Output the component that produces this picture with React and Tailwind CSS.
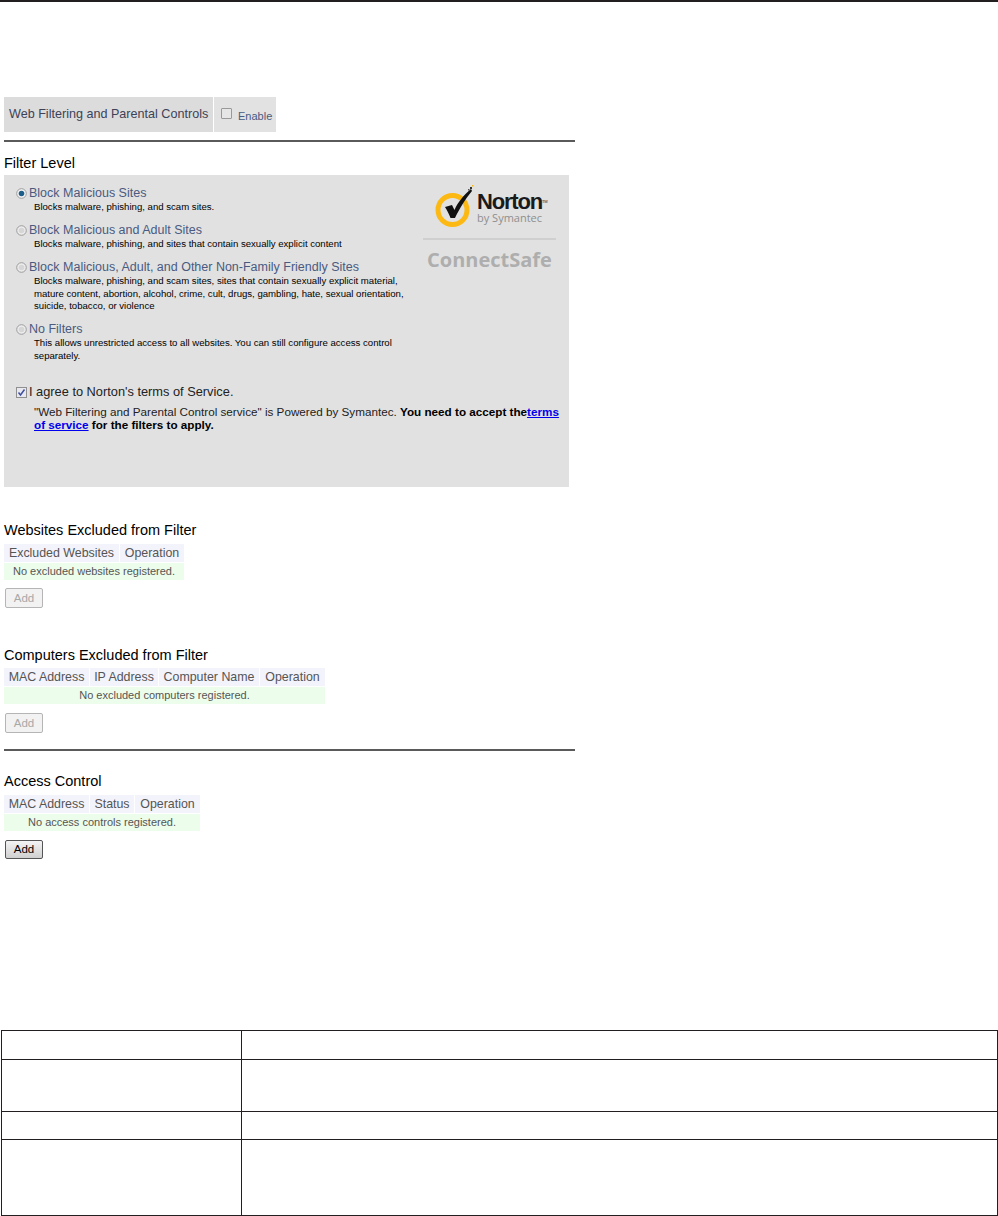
import React from 'react';

const filtros = [
  {
    titulo: 'Block Malicious Sites',
    activo: true,
    lineas: ['Blocks malware, phishing, and scam sites.'],
  },
  {
    titulo: 'Block Malicious and Adult Sites',
    lineas: ['Blocks malware, phishing, and sites that contain sexually explicit content'],
  },
  {
    titulo: 'Block Malicious, Adult, and Other Non-Family Friendly Sites',
    lineas: [
      'Blocks malware, phishing, and scam sites, sites that contain sexually explicit material,',
      'mature content, abortion, alcohol, crime, cult, drugs, gambling, hate, sexual orientation,',
      'suicide, tobacco, or violence',
    ],
  },
  {
    titulo: 'No Filters',
    lineas: [
      'This allows unrestricted access to all websites. You can still configure access control',
      'separately.',
    ],
  },
];

const Radio = ({ activo }) => (
  <svg width="11" height="11" viewBox="0 0 11 11" className="shrink-0">
    <circle cx="5.5" cy="5.5" r="4.8" fill={activo ? '#f4f4f4' : '#ececec'} stroke="#9c9c9c" />
    <circle cx="5.5" cy="5.5" r="2.8" fill={activo ? '#1d5f8a' : '#d6d6d6'} />
  </svg>
);

const NortonLogo = () => (
  <div className="w-[133px]">
    <div className="flex items-start h-[54px] pl-[12px]">
      <svg width="40" height="44" viewBox="0 0 40 44" className="shrink-0">
        <circle cx="17.5" cy="26" r="14.5" fill="none" stroke="#fdb913" strokeWidth="5" />
        <path d="M10 23 L17 21 L19.5 26 C23 18 28 12 36 5 L37 7 C30 15 24 26 20 34 L15.5 34 C14 30 12 26 10 23 Z" fill="#111" />
        <rect x="35" y="3" width="2" height="2" fill="#333" />
        <rect x="37" y="1" width="1.5" height="1.5" fill="#fdb913" />
        <rect x="33" y="5" width="1.5" height="1.5" fill="#555" />
      </svg>
      <div className="flex flex-col ml-[2px] mt-[7px]">
        <span className="font-bold text-[22px] leading-[21px] text-[#1a1a1a] tracking-[-1.2px] whitespace-nowrap">
          Norton<span className="text-[4px] align-top font-normal tracking-normal">TM</span>
        </span>
        <span className="font-['Open_Sans',sans-serif] text-[11px] leading-[12px] text-[#8f8f8f] whitespace-nowrap">by Symantec</span>
      </div>
    </div>
    <div className="h-[2px] bg-[#cfcfcf]" />
    <div className="font-['Open_Sans',sans-serif] font-bold text-[20px] leading-[26px] text-[#aeaeae] text-center mt-[7px]">ConnectSafe</div>
  </div>
);

const Tabla = ({ columnas, vacio }) => (
  <div className="flex flex-col w-fit">
    <div className="flex gap-px">
      {columnas.map(col => (
        <div key={col.nombre} className={`${col.ancho} bg-[#f3f3fb] h-[18px] text-center text-[12.4px] leading-[19px] text-[#555] whitespace-nowrap`}>
          {col.nombre}
        </div>
      ))}
    </div>
    <div className="bg-[#edfdeb] h-[17px] mt-px text-center text-[11px] leading-[16px] text-[#555]">{vacio}</div>
  </div>
);

const BotonAdd = ({ deshabilitado }) => (
  <button
    className={
      deshabilitado
        ? 'block ml-px w-[38px] h-[20px] border border-[#b5b5b5] rounded-[2px] bg-[#f2f2f2] text-[11.5px] leading-[18px] text-[#a8a8a8]'
        : 'block ml-px w-[38px] h-[19px] border border-[#555] rounded-[2px] bg-gradient-to-b from-[#f4f4f4] to-[#d0d0d0] text-[11.5px] leading-[17px] text-black'
    }
  >
    Add
  </button>
);

const Titulo = ({ children }) => (
  <div className="text-[14.5px] leading-[16px] text-black">{children}</div>
);

const filasAbajo = ['h-[28px]', 'h-[52px]', 'h-[28px]', 'h-[76px]'];

export default function App() {
  return (
    <div className="w-[998px] h-[1216px] bg-white font-['Liberation_Sans',Arial,sans-serif] overflow-hidden">
      <div className="h-[2px] bg-[#231f20]" />

      <div className="pl-[4px] pt-[95px]">
        {/* Encabezado */}
        <div className="flex gap-px">
          <div className="w-[209px] h-[35px] bg-[#dcdcdc] px-[5px] text-[12.6px] leading-[34px] text-[#3c4257] whitespace-nowrap">
            Web Filtering and Parental Controls
          </div>
          <div className="w-[62px] h-[35px] bg-[#e2e2e2] flex items-center pl-[7px]">
            <div className="w-[11px] h-[11px] border border-[#999] rounded-[1px] bg-[#e6e6e6] mb-[3px]" />
            <span className="ml-[6px] text-[11px] leading-[12px] text-[#4a5a80] mt-[2px]">Enable</span>
          </div>
        </div>

        <div className="w-[571px] h-[2px] bg-[#5a5a5a] mt-[8px]" />

        <div className="mt-[13px]"><Titulo>Filter Level</Titulo></div>

        {/* Panel de filtros */}
        <div className="w-[565px] h-[312px] bg-[#e1e1e1] mt-[4px] relative pt-[11px]">
          <div className="absolute right-[13px] top-[9px]"><NortonLogo /></div>
          <div className="flex flex-col gap-[9.5px] pl-[12px]">
            {filtros.map(f => (
              <div key={f.titulo}>
                <div className="flex items-center gap-[2px] h-[15px]">
                  <Radio activo={f.activo} />
                  <span className="text-[12.5px] leading-[15px] text-[#4a5a80] whitespace-nowrap">{f.titulo}</span>
                </div>
                <div className="pl-[18px]">
                  {f.lineas.map(l => (
                    <div key={l} className="text-[9.6px] leading-[12.5px] text-black whitespace-nowrap">{l}</div>
                  ))}
                </div>
              </div>
            ))}
          </div>

          <div className="flex items-center pl-[12px] mt-[22px] h-[16px]">
            <div className="w-[11px] h-[11px] border border-[#8f8f8f] bg-[#e8e8f0] flex items-center justify-center shrink-0">
              <svg width="9" height="9" viewBox="0 0 9 9">
                <path d="M1.5 4.5 L3.5 7 L7.5 1.5" fill="none" stroke="#3f4f9f" strokeWidth="1.5" />
              </svg>
            </div>
            <span className="ml-[2px] text-[12.8px] leading-[16px] text-[#222] whitespace-nowrap">I agree to Norton's terms of Service.</span>
          </div>
          <div className="pl-[30px] mt-[5px] text-[11.7px] leading-[13px] text-[#222] whitespace-nowrap">
            <div>
              "Web Filtering and Parental Control service" is Powered by Symantec.{' '}
              <b className="text-black">You need to accept the<a className="text-[#0000ee] underline">terms</a></b>
            </div>
            <div>
              <b className="text-black"><a className="text-[#0000ee] underline">of service</a> for the filters to apply.</b>
            </div>
          </div>
        </div>

        <div className="mt-[35px]"><Titulo>Websites Excluded from Filter</Titulo></div>
        <div className="mt-[6px]">
          <Tabla
            columnas={[
              { nombre: 'Excluded Websites', ancho: 'w-[115px]' },
              { nombre: 'Operation', ancho: 'w-[64px]' },
            ]}
            vacio="No excluded websites registered."
          />
        </div>
        <div className="mt-[8px]"><BotonAdd deshabilitado /></div>

        <div className="mt-[39px]"><Titulo>Computers Excluded from Filter</Titulo></div>
        <div className="mt-[5px]">
          <Tabla
            columnas={[
              { nombre: 'MAC Address', ancho: 'w-[85px]' },
              { nombre: 'IP Address', ancho: 'w-[68px]' },
              { nombre: 'Computer Name', ancho: 'w-[100px]' },
              { nombre: 'Operation', ancho: 'w-[65px]' },
            ]}
            vacio="No excluded computers registered."
          />
        </div>
        <div className="mt-[9px]"><BotonAdd deshabilitado /></div>

        <div className="w-[571px] h-[2px] bg-[#5a5a5a] mt-[16px]" />

        <div className="mt-[22px]"><Titulo>Access Control</Titulo></div>
        <div className="mt-[6px]">
          <Tabla
            columnas={[
              { nombre: 'MAC Address', ancho: 'w-[85px]' },
              { nombre: 'Status', ancho: 'w-[44px]' },
              { nombre: 'Operation', ancho: 'w-[65px]' },
            ]}
            vacio="No access controls registered."
          />
        </div>
        <div className="mt-[9px]"><BotonAdd /></div>
      </div>

      {/* Tabla inferior vacía */}
      <div className="mt-[171px] ml-px border-t border-b border-[#231f20]">
        {filasAbajo.map((alto, i) => (
          <div key={i} className={`flex ${alto} border-l border-r border-[#231f20] ${i > 0 ? 'border-t' : ''}`}>
            <div className="w-[240px] border-r border-[#231f20]" />
            <div className="flex-1" />
          </div>
        ))}
      </div>
    </div>
  );
}
